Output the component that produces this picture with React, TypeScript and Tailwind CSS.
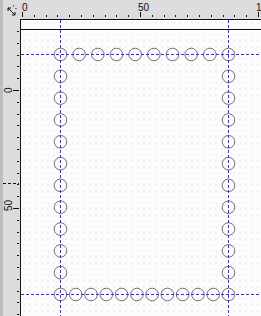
import React from 'react'

const guide = '#4432ac'
const ink = '#111'
const ring = '#737373'

// ruler scale: 0 at 22px, 50 at 140px (page coords)
const unit = 118 / 50
const topX = (u: number) => 1 + u * unit // relative to top ruler (starts x=21)
const leftY = (u: number) => 71 + u * unit // relative to left ruler (starts y=19)

function TopRuler() {
  const ticks = []
  for (let u = -5; u <= 105; u += 5) ticks.push(u)
  return (
    <svg width="240" height="19" className="block">
      {ticks.map((u) => {
        const x = Math.round(topX(u)) + 0.5
        const major = u % 50 === 0
        return <line key={u} x1={x} x2={x} y1={major ? 12 : 15} y2={17} stroke={ink} strokeWidth="1" />
      })}
      {[0, 50, 100].map((u) => (
        <text key={u} x={Math.round(topX(u)) - (u === 0 ? 0 : 2)} y="11" fontSize="10" fontFamily="Liberation Sans, sans-serif" fill={ink}>
          {u}
        </text>
      ))}
    </svg>
  )
}

function LeftRuler() {
  const ticks = []
  for (let u = -25; u <= 95; u += 5) ticks.push(u)
  return (
    <svg width="21" height="297" className="block">
      {ticks.map((u) => {
        const y = Math.round(leftY(u)) + 0.5
        const major = u % 50 === 0
        return <line key={u} x1={major ? 13 : 17} x2={19} y1={y} y2={y} stroke={ink} strokeWidth="1" />
      })}
      {[0, 50].map((u) => {
        const y = Math.round(leftY(u)) + 3
        return (
          <text key={u} x="12" y={y} fontSize="10" fontFamily="Liberation Sans, sans-serif" fill={ink} transform={`rotate(-90 12 ${y})`}>
            {u}
          </text>
        )
      })}
      <line x1="3" x2="19" y1="164.5" y2="164.5" stroke={ink} strokeDasharray="3 2" />
    </svg>
  )
}

function Canvas() {
  // page coords minus canvas content origin (21, 20)
  const ox = 21
  const oy = 20
  const gx1 = 60.5 - ox
  const gx2 = 228.5 - ox
  const gy1 = 54.5 - oy
  const gy2 = 294.5 - oy
  const r = 6.3

  const top = Array.from({ length: 10 }, (_, i) => gx1 + (i * (gx2 - gx1)) / 9)
  const bottom = Array.from({ length: 12 }, (_, i) => gx1 + (i * (gx2 - gx1)) / 11)
  const side = Array.from({ length: 12 }, (_, i) => gy1 + (i * (gy2 - gy1)) / 11)

  return (
    <svg width="240" height="296" className="block">
      <line x1="0" x2="240" y1="9.5" y2="9.5" stroke={ink} />
      {top.map((x, i) => <circle key={'t' + i} cx={x} cy={gy1} r={r} fill="none" stroke={ring} />)}
      {bottom.map((x, i) => <circle key={'b' + i} cx={x} cy={gy2} r={r} fill="none" stroke={ring} />)}
      {side.slice(1, 11).map((y, i) => <circle key={'l' + i} cx={gx1} cy={y} r={r} fill="none" stroke={ring} />)}
      {side.slice(1, 11).map((y, i) => <circle key={'r' + i} cx={gx2} cy={y} r={r} fill="none" stroke={ring} />)}
      <path
        d={`M${gx1} 0 V296 M${gx2} 0 V296 M0 ${gy1} H240 M0 ${gy2} H240`}
        stroke={guide}
        strokeWidth="1"
        strokeDasharray="3 2"
        fill="none"
      />
    </svg>
  )
}

export default function App() {
  return (
    <div className="w-[261px] h-[316px] overflow-hidden bg-[#c8c8c8] font-['Liberation_Sans',sans-serif]">
      <div className="flex h-[19px]">
        <div className="w-[21px] flex items-center justify-center bg-[#dcdcdc] border-l-[3px] border-[#bdbdbd]">
          <svg width="12" height="12" viewBox="0 0 12 12" className="mt-[3px]">
            <path d="M2 3 L9 10" stroke={ink} strokeWidth="1" />
            <path d="M2 3 L2 6 M2 3 L5 3" stroke={ink} strokeWidth="1" fill="none" />
            <path d="M9 10 L9 7 M9 10 L6 10" stroke={ink} strokeWidth="1" fill="none" />
            <path d="M7 1 L8 1 M10 3 L10 4" stroke={ink} strokeWidth="1" />
          </svg>
        </div>
        <div className="flex-1 bg-[#dcdcdc] overflow-hidden">
          <TopRuler />
        </div>
      </div>
      <div className="flex">
        <div className="w-[21px] bg-[#dcdcdc] border-l-[3px] border-[#bdbdbd] overflow-hidden">
          <div className="-ml-[3px]">
            <LeftRuler />
          </div>
        </div>
        <div className="flex-1 border-l border-t border-[#111] bg-[#fcfcfc] bg-[radial-gradient(#e6e6e6_0.6px,transparent_0.8px)] bg-[size:6px_6px] overflow-hidden -ml-px">
          <Canvas />
        </div>
      </div>
    </div>
  )
}
